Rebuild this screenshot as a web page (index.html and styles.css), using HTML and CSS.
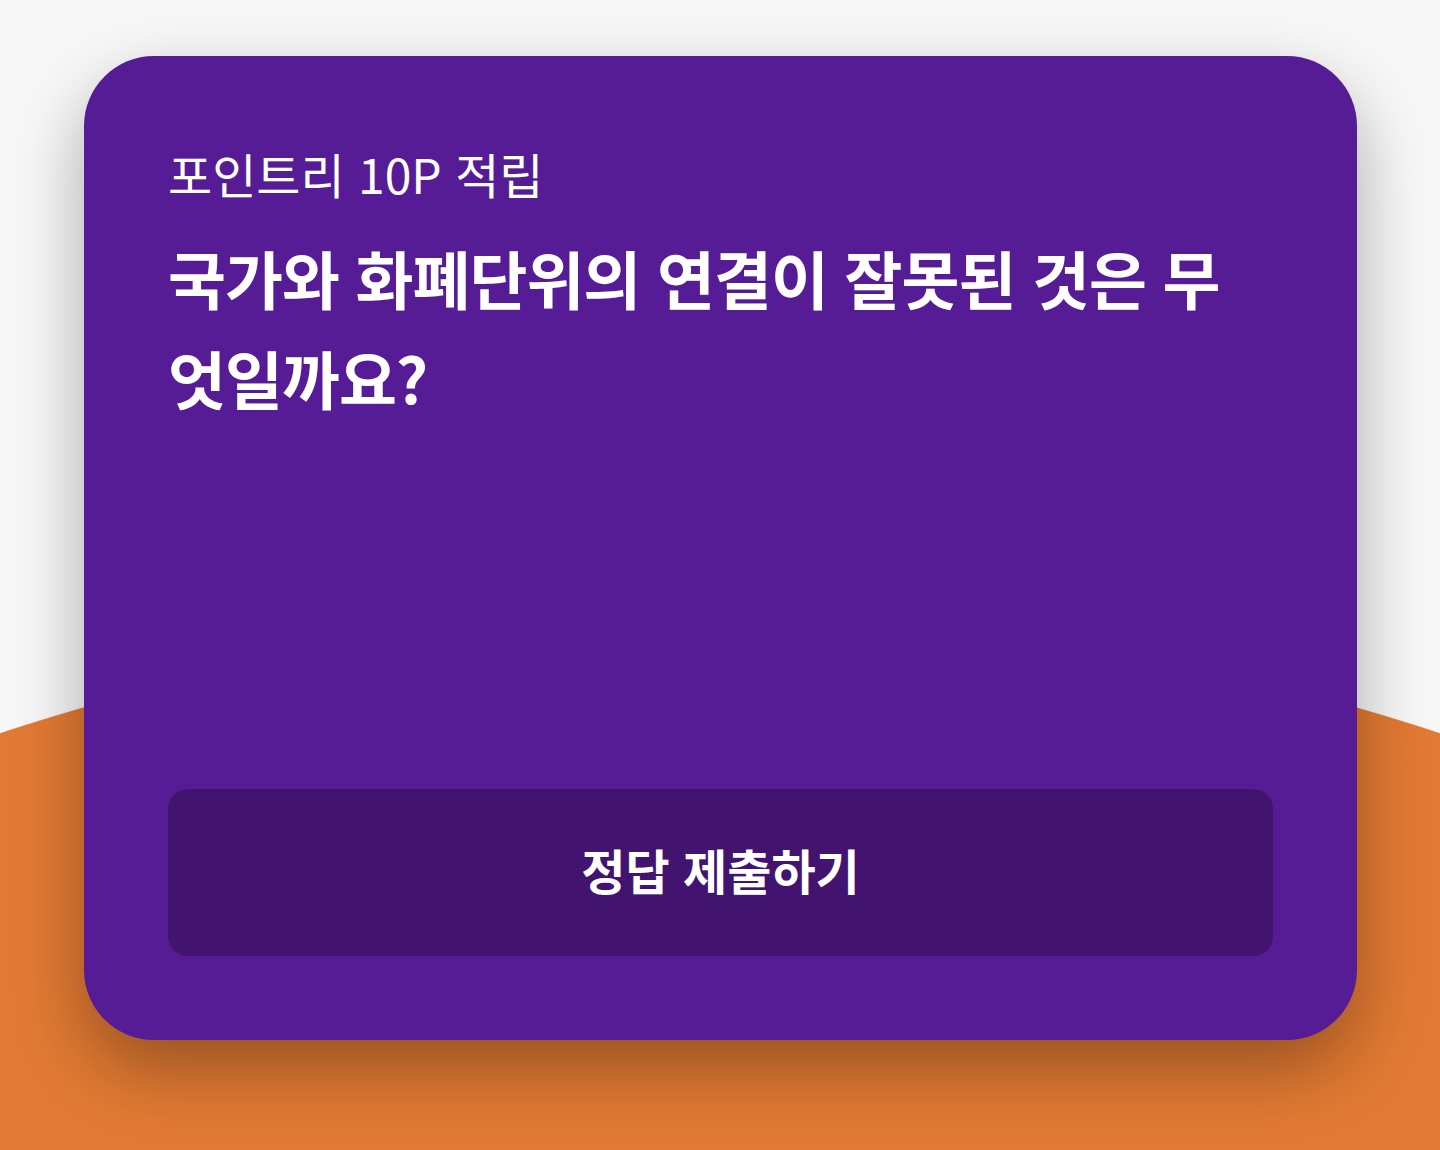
FILE: index.html
```html
<!DOCTYPE html>
<html lang="ko">
<head>
<meta charset="utf-8">
<link rel="stylesheet" href="styles.css">
</head>
<body>
<main class="page">
  <section class="card">
    <p class="label">포인트리 10P 적립</p>
    <h1 class="question">국가와 화폐단위의 연결이 잘못된 것은 무엇일까요?</h1>
    <button class="submit" type="button">정답 제출하기</button>
  </section>
</main>
</body>
</html>
```
FILE: styles.css
```css
html, body {
  margin: 0;
  padding: 0;
}
body {
  width: 1440px;
  height: 1150px;
  overflow: hidden;
  font-family: "Noto Sans CJK KR", "Noto Sans", sans-serif;
  background: radial-gradient(circle 2300px at 720px 2917px, #e37a33 0, #e27a33 99.95%, #f7f7f7 100%);
}
.page {
  padding: 56px 83px 0 84px;
}
.card {
  box-sizing: border-box;
  height: 984px;
  background: #561c96;
  border-radius: 70px;
  padding: 84px;
  display: flex;
  flex-direction: column;
  box-shadow: 0 30px 70px rgba(0, 0, 0, 0.32);
}
.label {
  margin: 0;
  color: #fff;
  font-size: 48px;
  line-height: 67px;
  font-weight: 400;
  letter-spacing: 0;
}
.question {
  margin: 20px 0 0;
  color: #fff;
  font-size: 63px;
  line-height: 100px;
  font-weight: 700;
  letter-spacing: -1px;
  word-break: break-all;
}
.submit {
  margin-top: auto;
  height: 167px;
  border: 0;
  border-radius: 20px;
  background: #42146f;
  color: #fff;
  font-family: inherit;
  font-size: 48px;
  font-weight: 700;
  letter-spacing: 0;
  padding: 0 0 8px;
}
```
